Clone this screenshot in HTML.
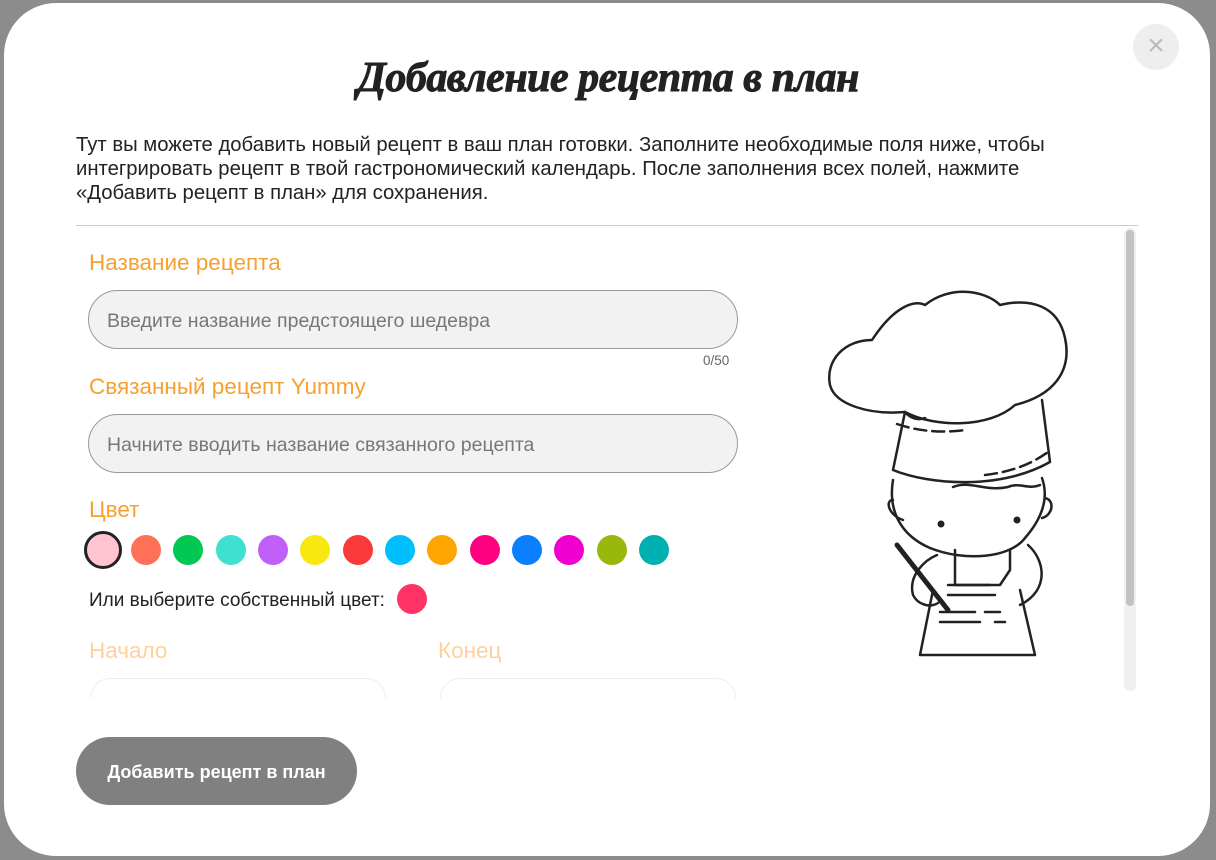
<!DOCTYPE html>
<html><head><meta charset="utf-8"><style>
*{box-sizing:border-box;margin:0;padding:0}
body{width:1216px;height:860px;background:#8c8c8c;font-family:"Liberation Sans","Noto Sans CJK SC",sans-serif;position:relative;overflow:hidden;color:#222}
.modal{position:absolute;left:4px;top:3px;width:1206px;height:853px;background:#fff;border-radius:52px}
.close{position:absolute;left:1133px;top:24px;width:46px;height:46px;border-radius:50%;background:#eee;color:#bbb;font-size:30px;text-align:center;line-height:44px}
h1{position:absolute;left:0;width:1216px;top:54px;text-align:center;font-family:"Liberation Serif",serif;font-style:italic;font-weight:900;font-size:42px;color:#222;letter-spacing:-0.5px;-webkit-text-stroke:1px #222}
.intro{position:absolute;left:76px;top:133px;width:1000px;font-size:20.3px;line-height:24px;color:#222}
.hr{position:absolute;left:76px;top:225px;width:1062px;height:1px;background:#ccc}
.lbl{position:absolute;left:89px;font-size:22.5px;color:#f5a030}
.inp{position:absolute;left:88px;width:650px;height:59px;border:1px solid #999;border-radius:30px;background:#f2f2f2;font-size:19.5px;color:#777;padding:0 18px;line-height:61px}
.dot{position:absolute;top:535px;width:30px;height:30px;border-radius:50%}
.sb{position:absolute;left:1124px;top:228px;width:12px;height:463px;background:#f0f0f0;border-radius:6px}
.sb i{position:absolute;left:2px;top:2px;width:8px;height:376px;background:#c2c2c2;border-radius:4px}
.btn{position:absolute;left:76px;top:737px;width:281px;height:68px;border-radius:34px;background:#808080;color:#fff;font-weight:bold;font-size:18px;text-align:center;line-height:70px}
</style></head><body>
<div class="modal"></div>
<div class="close">×</div>
<h1>Добавление рецепта в план</h1>
<div class="intro">Тут вы можете добавить новый рецепт в ваш план готовки. Заполните необходимые поля ниже, чтобы интегрировать рецепт в твой гастрономический календарь. После заполнения всех полей, нажмите «Добавить рецепт в план» для сохранения.</div>
<div class="hr"></div>
<div class="lbl" style="top:250px">Название рецепта</div>
<div class="inp" style="top:290px">Введите название предстоящего шедевра</div>
<div style="position:absolute;left:703px;top:353px;font-size:13.5px;color:#666">0/50</div>
<div class="lbl" style="top:374px">Связанный рецепт Yummy</div>
<div class="inp" style="top:414px">Начните вводить название связанного рецепта</div>
<div class="lbl" style="top:497px">Цвет</div>
<div class="dot" style="left:84px;top:531px;width:38px;height:38px;background:#ffc4d0;border:3px solid #222"></div>
<div class="dot" style="left:131px;background:#ff7058"></div>
<div class="dot" style="left:173px;background:#00c853"></div>
<div class="dot" style="left:216px;background:#40e0d0"></div>
<div class="dot" style="left:258px;background:#c060f8"></div>
<div class="dot" style="left:300px;background:#f8e810"></div>
<div class="dot" style="left:343px;background:#f83a3a"></div>
<div class="dot" style="left:385px;background:#00bfff"></div>
<div class="dot" style="left:427px;background:#ffa500"></div>
<div class="dot" style="left:470px;background:#ff0080"></div>
<div class="dot" style="left:512px;background:#0a80ff"></div>
<div class="dot" style="left:554px;background:#f000d0"></div>
<div class="dot" style="left:597px;background:#98b80e"></div>
<div class="dot" style="left:639px;background:#00b0b0"></div>
<div style="position:absolute;left:89px;top:590px;font-size:19px;color:#222">Или выберите собственный цвет:</div>
<div class="dot" style="left:397px;top:584px;background:#ff3366"></div>
<div class="lbl" style="top:638px;color:#ffd09a">Начало</div>
<div class="lbl" style="top:638px;left:438px;color:#ffd09a">Конец</div>
<div style="position:absolute;left:90px;top:678px;width:296px;height:20px;border:1px solid #eee;border-bottom:none;border-radius:30px 30px 0 0"></div>
<div style="position:absolute;left:440px;top:678px;width:296px;height:20px;border:1px solid #eee;border-bottom:none;border-radius:30px 30px 0 0"></div>
<svg style="position:absolute;left:780px;top:280px" width="300" height="400" viewBox="780 280 300 400" fill="none" stroke="#222" stroke-width="2.5" stroke-linecap="round" stroke-linejoin="round">
<path d="M872 340 C845 340 825 360 830 385 C835 405 870 415 905 412 C935 428 990 428 1015 405 C1055 395 1072 370 1065 338 C1058 305 1030 298 1000 305 C985 290 950 285 925 305 C915 300 895 305 872 340Z"/>
<path d="M905 412 C912 420 920 420 925 418 M905 412 L893 470 C930 485 1000 490 1050 462 L1042 400"/>
<path d="M897 424 C920 432 945 433 965 430" stroke-dasharray="12 6"/>
<path d="M985 475 C1010 472 1030 465 1048 452" stroke-dasharray="12 6"/>
<path d="M893 480 C888 510 900 535 930 548 C965 562 1010 558 1025 538 C1045 515 1048 495 1042 478"/>
<path d="M893 500 C885 500 888 515 903 520"/>
<path d="M1045 498 C1055 500 1053 515 1042 518"/>
<path d="M953 487 C970 480 985 492 1008 487 C1020 482 1028 490 1040 485"/>
<circle cx="941" cy="524" r="3.5" fill="#222" stroke="none"/><circle cx="1017" cy="520" r="3.5" fill="#222" stroke="none"/>
<path d="M937 555 C925 560 908 575 913 595 C918 605 930 608 938 603"/>
<path d="M1028 545 C1045 560 1050 590 1020 605"/>
<path d="M955 550 L955 585 L1000 585 L1010 570 L1010 550"/>
<path d="M933 590 L920 655 L1035 655 L1020 590"/>
<path d="M897 545 L948 610" stroke-width="5"/>
<path d="M948 585 L990 585 M948 595 L995 595 M940 612 L975 612 M985 612 L1000 612 M940 622 L980 622 M995 622 L1005 622"/>
</svg>
<div class="sb"><i></i></div>
<div class="btn">Добавить рецепт в план</div>
</body></html>
